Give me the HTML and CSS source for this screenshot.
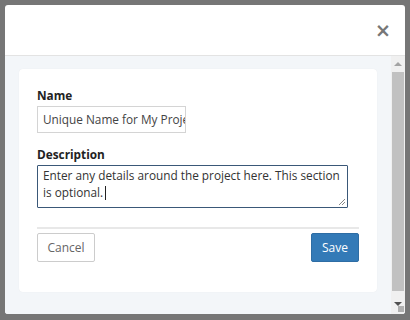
FILE: index.html
```html
<!DOCTYPE html>
<html lang="en">
<head>
    <meta charset="UTF-8">
    <title>Edit Project</title>
    <link rel="stylesheet" href="styles.css">
</head>
<body>
    <div class="modal">
        <div class="modal-header">
            <span class="close">&times;</span>
        </div>
        <div class="modal-body">
            <div class="modal-content">
                <div class="card">
                    <label class="field-label">Name</label>
                    <div class="text-input">Unique Name for My Project</div>

                    <label class="field-label second">Description</label>
                    <div class="text-area">
                        Enter any details around the project here. This section is optional.<span class="caret"></span>
                        <svg class="grip" width="8" height="8" viewBox="0 0 8 8">
                            <path d="M1 7 L7 1 M4 7 L7 4" stroke="#888" stroke-width="1"/>
                        </svg>
                    </div>

                    <div class="form-footer">
                        <button type="button" class="btn btn-default">Cancel</button>
                        <button type="button" class="btn btn-primary">Save</button>
                    </div>
                </div>
            </div>
            <!-- scrollbar of the modal body -->
            <div class="scrollbar">
                <span class="arrow up"></span>
                <div class="thumb"></div>
                <span class="arrow down"></span>
                <span class="corner"></span>
            </div>
        </div>
    </div>
</body>
</html>
```

FILE: styles.css
```css
body {
    background-color: #767676;
    font-family: "Open Sans", Arial, sans-serif;
    font-size: 11.8px;
    color: #333;
    margin: 0;
    padding: 5px 5px 0 5px;
    height: 320px;
    box-sizing: border-box;
    overflow: hidden;
}

.modal {
    background-color: #fff;
    border-radius: 3px;
    height: 309px;
    display: flex;
    flex-direction: column;
    overflow: hidden;
}

.modal-header {
    height: 50px;
    border-bottom: 1px solid #e3e3e3;
    display: flex;
    justify-content: flex-end;
    align-items: center;
    padding-right: 14px;
    flex-shrink: 0;
}

.close {
    color: #777;
    font-family: "DejaVu Sans", sans-serif;
    font-weight: bold;
    font-size: 19px;
    line-height: 20px;
}

.modal-body {
    flex: 1;
    display: flex;
    background-color: #f3f6f9;
}

.modal-content {
    flex: 1;
    padding: 13px 14px 0 14px;
}

.card {
    background-color: #fff;
    border-radius: 4px;
    padding: 18px 18px 0 18px;
    height: 205px;
    box-shadow: 0 0 1px rgba(0, 0, 0, 0.08);
}

.field-label {
    display: block;
    font-weight: bold;
    color: #222;
    line-height: 16px;
    margin-bottom: 3px;
}

.field-label.second {
    margin-top: 13px;
}

.text-input {
    width: 149px;
    height: 27px;
    box-sizing: border-box;
    border: 1px solid #d4d4d4;
    padding: 0 5px;
    line-height: 25px;
    white-space: nowrap;
    overflow: hidden;
    color: #444;
}

.text-area {
    position: relative;
    width: 311px;
    height: 43px;
    box-sizing: border-box;
    border: 1px solid #3a5878;
    border-radius: 1px;
    padding: 1px 5px;
    line-height: 17px;
    color: #333;
}

.caret {
    display: inline-block;
    width: 1px;
    height: 14px;
    background-color: #222;
    vertical-align: -3px;
    margin-left: 2px;
}

.grip {
    position: absolute;
    right: 1px;
    bottom: 1px;
}

.form-footer {
    margin-top: 19px;
    border-top: 2px solid #e8e8e8;
    padding-top: 4px;
    display: flex;
    justify-content: space-between;
}

.btn {
    font-family: "Open Sans", Arial, sans-serif;
    font-size: 12px;
    height: 29px;
    border-radius: 2px;
    cursor: pointer;
}

.btn-default {
    width: 58px;
    background-color: #fff;
    border: 1px solid #ccc;
    color: #666;
}

.btn-primary {
    width: 48px;
    background-color: #337ab7;
    border: 1px solid #2e6da4;
    color: #fff;
}

.scrollbar {
    width: 14px;
    background-color: #f0f0f0;
    display: flex;
    flex-direction: column;
    align-items: center;
    position: relative;
}

.arrow {
    width: 0;
    height: 0;
    border-left: 4px solid transparent;
    border-right: 4px solid transparent;
}

.arrow.up {
    border-bottom: 4px solid #a3a3a3;
    margin: 6px 0 6px 0;
}

.arrow.down {
    border-top: 4px solid #505050;
    margin: 11px 0 0 0;
}

.thumb {
    width: 12px;
    height: 219px;
    background-color: #c1c1c1;
}

.corner {
    position: absolute;
    right: 1px;
    bottom: 2px;
    width: 6px;
    height: 6px;
    background-color: #b0b0b0;
}
```
